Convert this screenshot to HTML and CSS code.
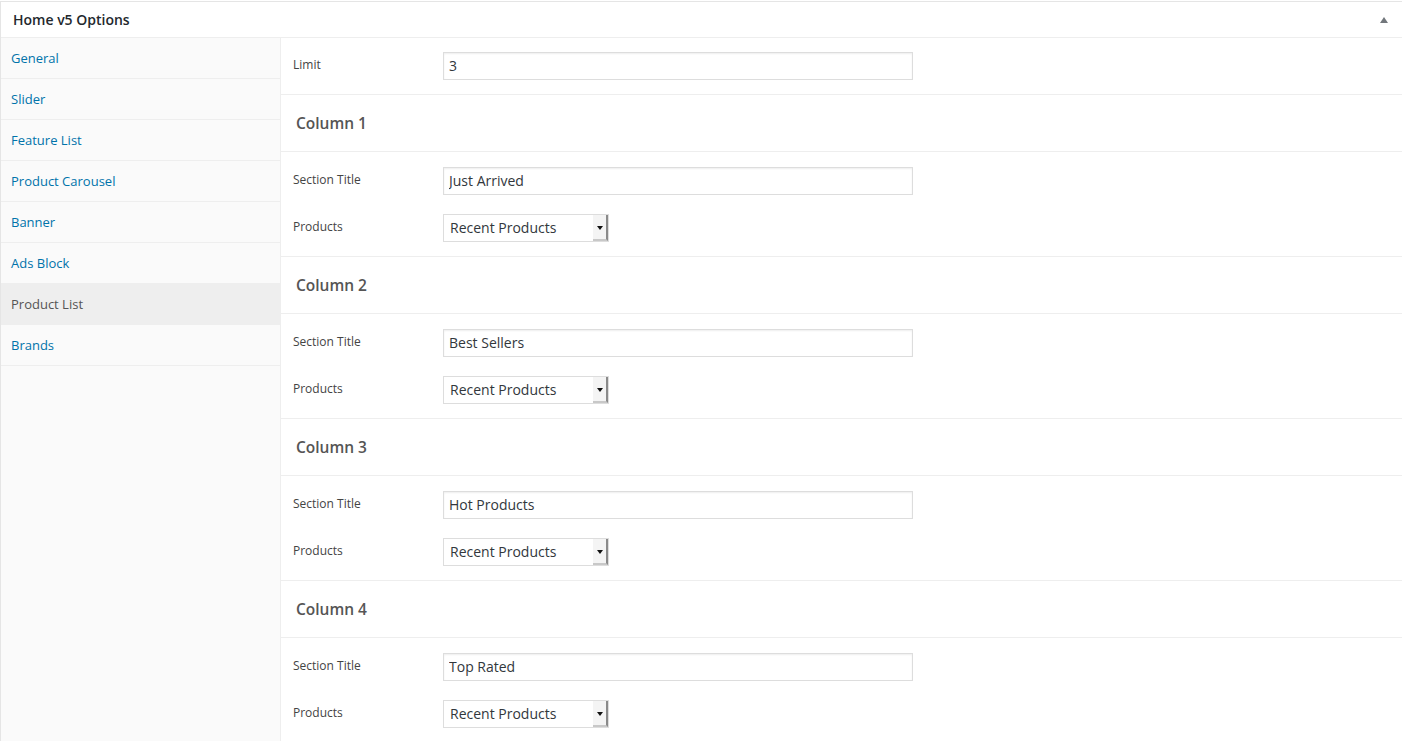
FILE: index.html
```html
<!DOCTYPE html>
<html>
<head>
<meta charset="utf-8">
<link rel="stylesheet" href="styles.css">
</head>
<body>
<div class="box">
  <div class="box-head">
    <h2 class="box-title">Home v5 Options</h2>
    <span class="toggle"></span>
  </div>
  <div class="box-body">
    <ul class="tabs">
      <li class="tab"><a>General</a></li>
      <li class="tab"><a>Slider</a></li>
      <li class="tab"><a>Feature List</a></li>
      <li class="tab"><a>Product Carousel</a></li>
      <li class="tab"><a>Banner</a></li>
      <li class="tab"><a>Ads Block</a></li>
      <li class="tab active"><a>Product List</a></li>
      <li class="tab"><a>Brands</a></li>
    </ul>
    <div class="panel">
      <div class="group single">
        <div class="field"><label class="label">Limit</label><input class="text" type="text" value="3"></div>
      </div>
      <div class="heading">Column 1</div>
      <div class="group">
        <div class="field"><label class="label">Section Title</label><input class="text" type="text" value="Just Arrived"></div>
        <div class="field"><label class="label">Products</label><div class="select"><span class="select-text">Recent Products</span><span class="select-btn"><span class="arrow"></span></span></div></div>
      </div>
      <div class="heading">Column 2</div>
      <div class="group">
        <div class="field"><label class="label">Section Title</label><input class="text" type="text" value="Best Sellers"></div>
        <div class="field"><label class="label">Products</label><div class="select"><span class="select-text">Recent Products</span><span class="select-btn"><span class="arrow"></span></span></div></div>
      </div>
      <div class="heading">Column 3</div>
      <div class="group">
        <div class="field"><label class="label">Section Title</label><input class="text" type="text" value="Hot Products"></div>
        <div class="field"><label class="label">Products</label><div class="select"><span class="select-text">Recent Products</span><span class="select-btn"><span class="arrow"></span></span></div></div>
      </div>
      <div class="heading">Column 4</div>
      <div class="group">
        <div class="field"><label class="label">Section Title</label><input class="text" type="text" value="Top Rated"></div>
        <div class="field"><label class="label">Products</label><div class="select"><span class="select-text">Recent Products</span><span class="select-btn"><span class="arrow"></span></span></div></div>
      </div>
    </div>
  </div>
</div>
</body>
</html>
```

FILE: styles.css
```css
* { box-sizing: border-box; }
html, body { margin: 0; padding: 0; background: #fff; }
body {
  font-family: "Open Sans", "Noto Sans", sans-serif;
  color: #444;
  overflow: hidden;
  height: 741px;
}
.box {
  margin-top: 1px;
  border-top: 1px solid #e5e5e5;
  border-left: 1px solid #e5e5e5;
  background: #fff;
  height: 740px;
  display: flex;
  flex-direction: column;
}
.box-head {
  height: 36px;
  border-bottom: 1px solid #eee;
  display: flex;
  align-items: center;
  justify-content: space-between;
  padding: 0 14px 0 12px;
  flex-shrink: 0;
}
.box-title {
  margin: 0;
  font-size: 14px;
  font-weight: 600;
  color: #23282d;
  line-height: 1;
}
.toggle {
  width: 0; height: 0;
  border-left: 4px solid transparent;
  border-right: 4px solid transparent;
  border-bottom: 6px solid #72777c;
}
.box-body {
  display: flex;
  flex: 1;
  min-height: 0;
}
.tabs {
  list-style: none;
  margin: 0;
  padding: 0;
  width: 280px;
  flex-shrink: 0;
  background: #fafafa;
  border-right: 1px solid #eee;
}
.tab {
  height: 41px;
  border-bottom: 1px solid #eee;
  display: flex;
  align-items: center;
  padding-left: 10px;
  font-size: 13px;
  color: #0073aa;
}
.tab.active { background: #eee; color: #555; }
.panel {
  flex: 1;
  min-width: 0;
}
.group {
  padding: 15px 0 14px;
  border-bottom: 1px solid #eee;
  display: flex;
  flex-direction: column;
  gap: 19px;
}
.group.single { padding: 14px 0 14px; }
.field {
  display: flex;
  align-items: center;
  padding-left: 12px;
}
.label {
  width: 150px;
  font-size: 12px;
  color: #444;
  margin-top: -3px;
}
.text {
  width: 470px;
  height: 28px;
  border: 1px solid #ddd;
  box-shadow: inset 0 1px 2px rgba(0,0,0,0.07);
  font-family: "Open Sans", "Noto Sans", sans-serif;
  font-size: 14px;
  color: #32373c;
  padding: 0 5px 2px;
  margin: 0;
  outline: none;
  background: #fff;
}
.heading {
  height: 57px;
  border-bottom: 1px solid #eee;
  display: flex;
  align-items: center;
  padding: 0 0 0 15px;
  font-size: 15.5px;
  font-weight: 600;
  color: #555;
}
.select {
  width: 166px;
  height: 28px;
  border: 1px solid #ddd;
  display: flex;
  align-items: stretch;
  background: #fff;
}
.select-text {
  flex: 1;
  display: flex;
  align-items: center;
  padding: 0 0 2px 6px;
  font-size: 14px;
  color: #32373c;
}
.select-btn {
  width: 15px;
  background: #f4f4f4;
  border-right: 2px solid #8a8a8a;
  border-bottom: 2px solid #c8c8c8;
  display: flex;
  align-items: center;
  justify-content: center;
}
.arrow {
  width: 0; height: 0;
  border-left: 3px solid transparent;
  border-right: 3px solid transparent;
  border-top: 4px solid #111;
  margin-top: 1px;
}
```
